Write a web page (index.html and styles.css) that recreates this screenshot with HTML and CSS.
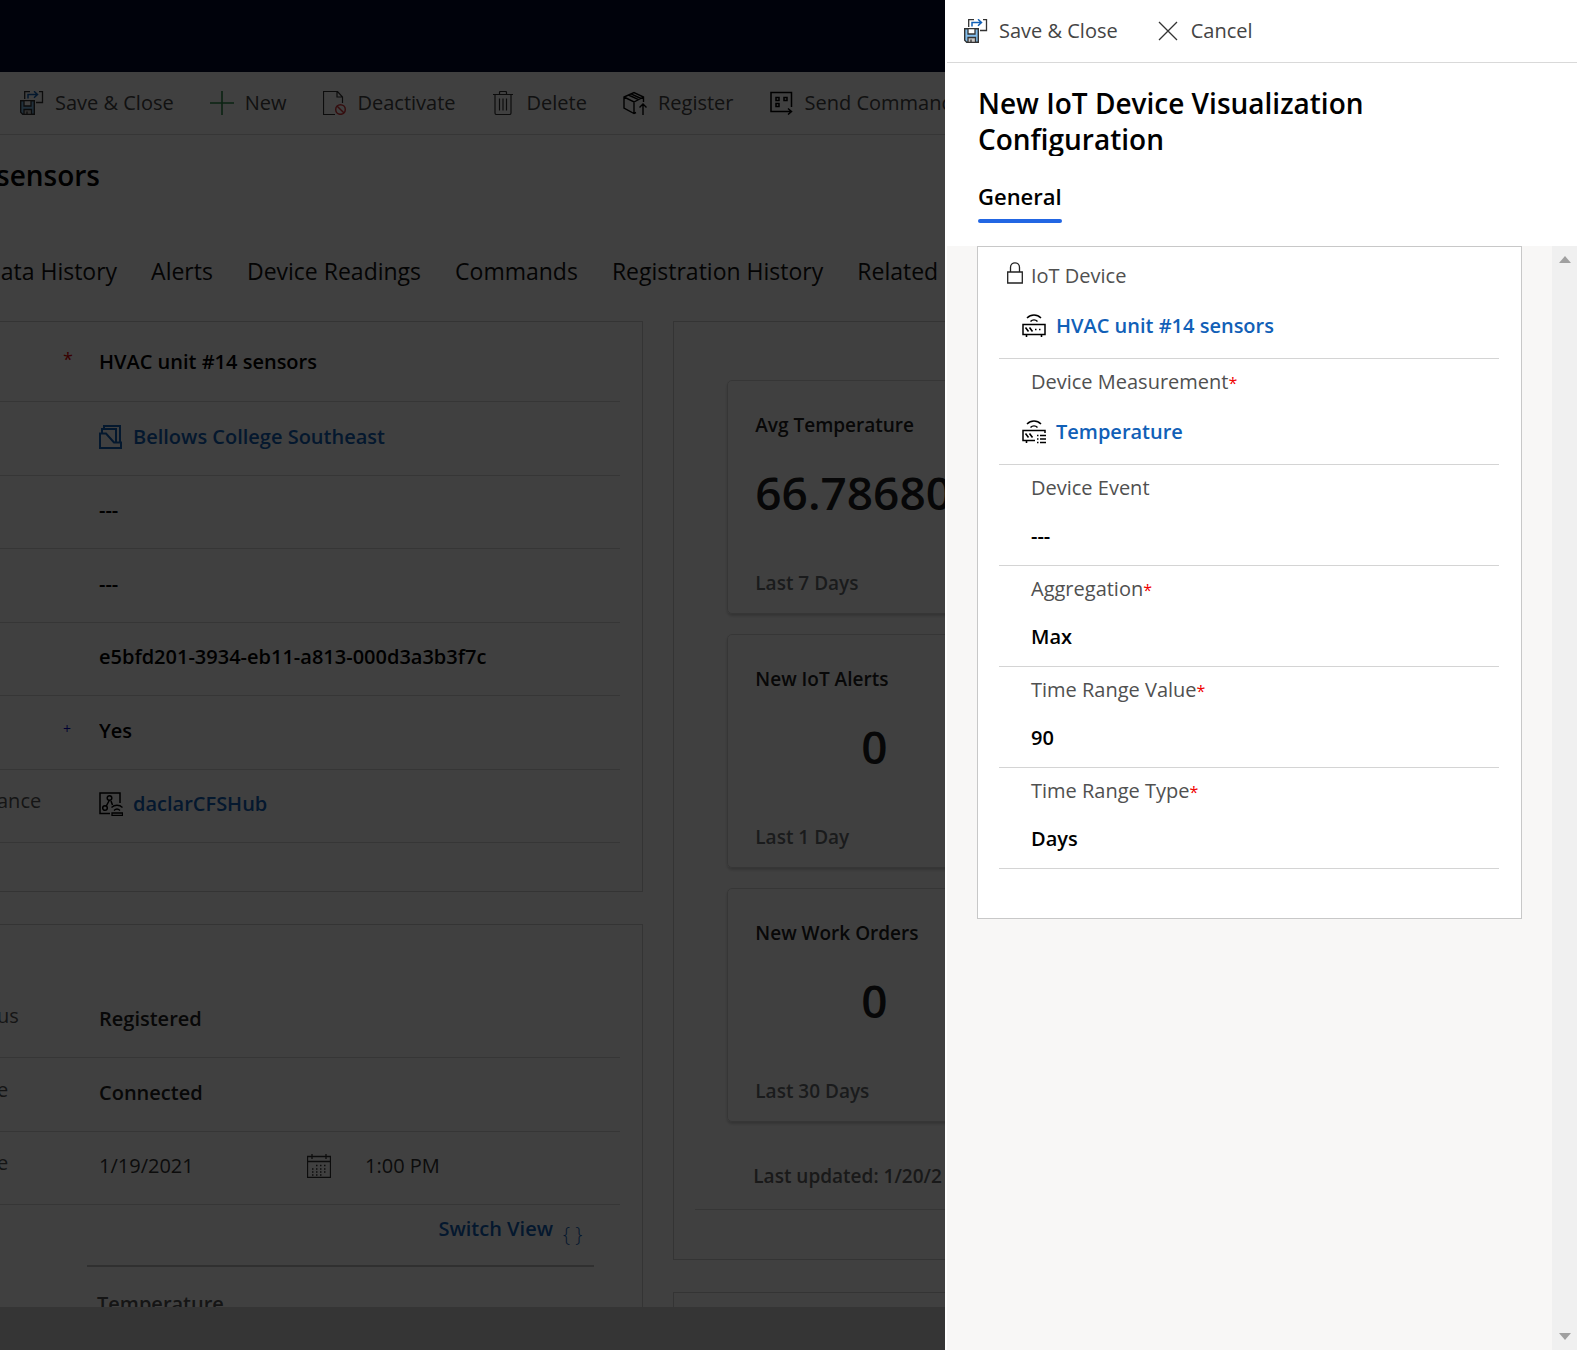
FILE: index.html
```html
<!DOCTYPE html>
<html lang="en">
<head>
<meta charset="utf-8">
<title>New IoT Device Visualization Configuration</title>
<link rel="stylesheet" href="styles.css">
</head>
<body>
<svg class="sprite" aria-hidden="true">
  <symbol id="i-save" viewBox="0 0 24 24">
    <path d="M4.700 8V.7H10M19 .7h3.500v10.800H16" fill="none" stroke="#333" stroke-width="1.300"/>
    <path d="M8 7.500V3.500h9.500M14 .3l3.500 3.200L14 6.700" fill="none" stroke="#1160b7" stroke-width="1.500"/>
    <path d="M.7 9.700h13.600v13.600H2.700l-2-2z" fill="#83beec" stroke="#333" stroke-width="1.400"/>
    <path d="M4 9.700h7V15H4z" fill="#fff" stroke="#333" stroke-width="1.300"/>
    <path d="M4 18.500h7.500v4.800H4z" fill="#c8c6c4" stroke="#333" stroke-width="1.300"/>
    <path d="M7 20.500v3" stroke="#333" stroke-width="1.300"/>
  </symbol>
  <symbol id="i-sensor" viewBox="0 0 24 24">
    <path d="M5 4c4-4 10-4 14 0M8.500 7.500c2-2 5-2 7 0" fill="none" stroke="#000" stroke-width="1.500"/>
    <path d="M1 10.500h22v10H1z" fill="none" stroke="#000" stroke-width="1.500"/>
    <path d="M3.500 13.500l3 4M7.500 13.500l3 4M13 15.500h1.500M17 15.500h1.500M4.500 20.500v2.500M19.500 20.500v2.500" fill="none" stroke="#000" stroke-width="1.600"/>
  </symbol>
  <symbol id="i-measure" viewBox="0 0 24 24">
    <path d="M5 4c4-4 10-4 14 0M8.500 7.500c2-2 5-2 7 0" fill="none" stroke="#000" stroke-width="1.500"/>
    <path d="M23 13v-2.500H1v10h12" fill="none" stroke="#000" stroke-width="1.500"/>
    <path d="M3.500 13.500l3 4M7.500 13.500l3 4M4.500 20.500v2.500" fill="none" stroke="#000" stroke-width="1.600"/>
    <path d="M15 15.500h1.500M18 15.500h6M15 19h1.500M18 19h6M15 22.500h1.500M18 22.500h6" stroke="#000" stroke-width="1.600"/>
  </symbol>
</svg>

<div class="app">
  <header class="topbar"></header>
  <nav class="commands" aria-label="Commands">
    <button class="command"><svg class="icon"><use href="#i-save"/></svg>Save &amp; Close</button>
    <button class="command"><svg class="icon" viewBox="0 0 24 24"><path d="M12 0v24M0 12h24" stroke="#2a8a4a" stroke-width="1.600"/></svg>New</button>
    <button class="command"><svg class="icon" viewBox="0 0 24 24"><path d="M12 23.500H.5V.5h14l5 5.500v6M14 .5V6h5.500" fill="none" stroke="#333" stroke-width="1.200"/><circle cx="17.500" cy="18.500" r="4.800" fill="none" stroke="#d13438" stroke-width="1.500"/><path d="M14.200 15.200l6.600 6.600" stroke="#d13438" stroke-width="1.500"/></svg>Deactivate</button>
    <button class="command"><svg class="icon" viewBox="0 0 24 24"><path d="M1 3.500h20M3 3.500V22q0 1.500 1.500 1.500h13Q19 23.500 19 22V3.500M7.500 3.500v-2q0-1 1-1h5q1 0 1 1v2M7.500 7.500v12M11 7.500v12M14.500 7.500v12" fill="none" stroke="#333" stroke-width="1.200"/></svg>Delete</button>
    <button class="command"><svg class="icon" viewBox="0 0 24 24"><path d="M13 21.500l-2 1L1 17V6l10-4.500L20.500 6v5M1 6l10 5 9.500-5M11 11v11.500M5.500 4l10 4.700M8 2.800l10 4.700M20 24V13.500M16.500 16.500l3.500-3.500 3.500 3.500" fill="none" stroke="#000" stroke-width="1.400"/></svg>Register</button>
    <button class="command"><svg class="icon" viewBox="0 0 24 24"><path d="M21.500 16V1.500H1v19h20M18 17.500l3.500 3-3.500 3M6 6.500h3v3H6zM14 6.500h3v3h-3zM6 12.500h3v3H6z" fill="none" stroke="#000" stroke-width="1.500"/></svg>Send Command</button>
  </nav>
  <h1 class="record-title">sensors</h1>
  <nav class="tabs" aria-label="Form tabs">
    <a href="#data">Data History</a><a href="#alerts">Alerts</a><a href="#readings">Device Readings</a><a href="#commands">Commands</a><a href="#registration">Registration History</a><a href="#related">Related</a>
  </nav>

  <main class="record">
    <div class="column">
      <section class="section details">
        <div class="row first"><span class="row-label"><i class="mark required">*</i></span><input class="value" aria-label="Name" value="HVAC unit #14 sensors"></div>
        <div class="row"><span class="row-label"></span><svg class="icon" viewBox="0 0 24 24"><path d="M1 8.500h6l8 9h7v5.500H1zM3 8.500V4h14v13M5 4V1h16v16.500" fill="none" stroke="#1160b7" stroke-width="2"/></svg><a class="lookup" href="#account">Bellows College Southeast</a></div>
        <div class="row"><span class="row-label"></span><input class="value" aria-label="Category" value="---"></div>
        <div class="row"><span class="row-label"></span><input class="value" aria-label="Parent device" value="---"></div>
        <div class="row"><span class="row-label"></span><input class="value" aria-label="Device ID" value="e5bfd201-3934-eb11-a813-000d3a3b3f7c"></div>
        <div class="row"><span class="row-label"><i class="mark recommended">+</i></span><input class="value" aria-label="Simulated" value="Yes"></div>
        <div class="row"><span class="row-label">ance</span><svg class="icon" viewBox="0 0 24 24"><path d="M11 21.500H1V1h20v10M10.500 8L7 14.500M12 9l1.500 4" fill="none" stroke="#000" stroke-width="1.500"/><circle cx="10.500" cy="6" r="2.300" fill="none" stroke="#000" stroke-width="1.500"/><circle cx="6" cy="16" r="2.300" fill="none" stroke="#000" stroke-width="1.500"/><path d="M12.500 15.500c3-3 8-3 11 0M15 18.500c2-2 4-2 6 0M13 21h10.500v2.500H13z" fill="none" stroke="#000" stroke-width="1.300"/></svg><a class="lookup" href="#hub">daclarCFSHub</a></div>
      </section>
      <section class="section status">
        <div class="row"><span class="row-label">us</span><input class="value soft" aria-label="Registration status" value="Registered"></div>
        <div class="row"><span class="row-label">e</span><input class="value soft" aria-label="Connection state" value="Connected"></div>
        <div class="row"><span class="row-label">e</span><input class="date" aria-label="Last activity date" value="1/19/2021"><button class="picker" aria-label="Choose date"><svg class="icon" viewBox="0 0 24 24"><path d="M.5 2.500h23v21H.5zM.5 7.500h23M5 0v5M19 0v5" fill="none" stroke="#333" stroke-width="1.300"/><path d="M9 11.500h11M5 15h15M5 18h15M5 21h11" stroke="#333" stroke-width="1.500" stroke-dasharray="1.500 2.500"/></svg></button><input class="date" aria-label="Last activity time" value="1:00 PM"></div>
        <div class="device-data">
          <div class="switch"><a href="#view">Switch View</a><span class="braces">{ }</span></div>
          <p class="reading">Temperature</p>
        </div>
      </section>
    </div>
    <div class="column">
      <section class="section summary">
        <div class="tiles">
          <article class="tile"><h2>Avg Temperature</h2><p class="number long">66.78680</p><p class="period">Last 7 Days</p></article>
          <article class="tile"><h2>New IoT Alerts</h2><p class="number">0</p><p class="period">Last 1 Day</p></article>
          <article class="tile"><h2>New Work Orders</h2><p class="number">0</p><p class="period">Last 30 Days</p></article>
        </div>
        <p class="updated">Last updated: 1/20/2</p>
      </section>
      <section class="section next"></section>
    </div>
  </main>
  <footer class="statusbar"></footer>
</div>
<div class="scrim"></div>

<aside class="panel" role="dialog" aria-labelledby="panel-title">
  <div class="panel-commands">
    <button class="command"><svg class="icon"><use href="#i-save"/></svg>Save &amp; Close</button>
    <button class="command"><svg class="icon" viewBox="0 0 24 24"><path d="M3 3l18 18M21 3L3 21" stroke="#333" stroke-width="1.300"/></svg>Cancel</button>
  </div>
  <div class="panel-head">
    <h2 class="panel-title" id="panel-title">New IoT Device Visualization Configuration</h2>
    <a class="panel-tab" href="#general">General</a>
  </div>
  <div class="panel-body">
    <form class="card">
      <div class="field lookup-field">
        <span class="field-label"><svg class="lock" viewBox="0 0 16 22"><path d="M.7 10h14.600v11H.7zM3.500 10V5.500c0-6.300 9-6.300 9 0V10" fill="none" stroke="#222" stroke-width="1.300"/></svg>IoT Device</span>
        <div class="field-lookup"><svg class="icon"><use href="#i-sensor"/></svg><a class="lookup" href="#device">HVAC unit #14 sensors</a></div>
      </div>
      <div class="field lookup-field">
        <span class="field-label">Device Measurement<i class="star">*</i></span>
        <div class="field-lookup"><svg class="icon"><use href="#i-measure"/></svg><a class="lookup" href="#measurement">Temperature</a></div>
      </div>
      <div class="field"><label class="field-label" for="event">Device Event</label><input class="value" id="event" value="---"></div>
      <div class="field"><label class="field-label" for="aggregation">Aggregation<i class="star">*</i></label><select class="value" id="aggregation"><option>Max</option></select></div>
      <div class="field"><label class="field-label" for="range">Time Range Value<i class="star">*</i></label><input class="value" id="range" value="90"></div>
      <div class="field"><label class="field-label" for="type">Time Range Type<i class="star">*</i></label><select class="value" id="type"><option>Days</option></select></div>
    </form>
    <div class="scrollbar" aria-hidden="true">
      <svg class="arrow" viewBox="0 0 12 7"><path d="M0 7l6-7 6 7z"/></svg>
      <svg class="arrow" viewBox="0 0 12 7"><path d="M0 0l6 7 6-7z"/></svg>
    </div>
  </div>
</aside>
</body>
</html>
```
FILE: styles.css
```css
* { box-sizing: border-box; margin: 0; }

body {
  position: relative;
  height: 100vh;
  overflow: hidden;
  font: 20px/28px "Open Sans", "Noto Sans", sans-serif;
  color: #333;
}

a { color: inherit; text-decoration: none; }
i { font-style: normal; }

button, input, select {
  padding: 0;
  border: 0;
  background: none;
  color: inherit;
  font: inherit;
  appearance: none;
}

.sprite { position: absolute; width: 0; height: 0; }
.icon { display: block; flex: none; width: 24px; height: 24px; }

/* Record page */
.app { display: flex; flex-direction: column; height: 100%; background: #fff; }
.topbar { flex: none; height: 72px; background: #000a2c; }

.commands {
  display: flex;
  flex: none;
  gap: 36px;
  height: 63px;
  padding-left: 20px;
  border-bottom: 1px solid #d8d8d8;
}
.command {
  display: flex;
  align-items: center;
  gap: 11px;
  white-space: nowrap;
  color: #444;
}

.record-title {
  flex: none;
  margin-left: -4px;
  padding: 22px 0 50px;
  font-size: 28px;
  line-height: 36px;
  font-weight: 600;
  color: #000;
}

.tabs {
  display: flex;
  flex: none;
  gap: 34px;
  margin-left: -16px;
  height: 78px;
  font-size: 23px;
  line-height: 56px;
  color: #111;
  white-space: nowrap;
}

.record {
  display: grid;
  flex: 1;
  grid-template-columns: 42fr 59fr;
  gap: 30px;
  min-height: 0;
  overflow: hidden;
}
.column { display: flex; flex-direction: column; gap: 32px; min-width: 0; }
.section { border: 1px solid #d0d0d0; }
.column:first-child .section { border-left: 0; padding-right: 22px; }
.details { padding-bottom: 48px; }
.status { padding-top: 60px; }

.row {
  display: flex;
  align-items: center;
  height: 74px;
  padding-bottom: 4px;
  border-bottom: 1px solid #d8d8d8;
}
.row:nth-child(odd) { height: 73px; }
.row.first { height: 80px; padding-bottom: 0; }
.row-label { flex: none; width: 102px; margin-left: -3px; padding-bottom: 6px; color: #555; }
.mark { margin-left: 66px; }
.required { color: #e00000; font-size: 18px; }
.recommended { color: #0000c8; font-size: 14px; }
.value { flex: 1; min-width: 0; font-weight: 600; color: #000; }
.soft { color: #222; }
.lookup { margin-left: 10px; font-weight: 600; color: #1160b7; }
.date { width: 208px; color: #333; }
.picker { margin-right: 34px; }

.device-data { margin: 0 26px 0 87px; }
.switch {
  display: flex;
  justify-content: flex-end;
  gap: 10px;
  height: 62px;
  padding: 10px 12px 0 0;
  border-bottom: 2px solid #c0c0c0;
  font-weight: 600;
  color: #1160b7;
}
.braces { padding-top: 6px; font-weight: 300; }
.reading { padding: 23px 0 0 10px; color: #555; font-weight: 600; }

.summary { padding: 58px 0 49px 53px; }
.tiles { display: grid; gap: 20px; }
.tile {
  width: 294px;
  height: 234px;
  padding: 30px 27px 0;
  border: 1px solid #d8d8d8;
  border-radius: 5px;
  box-shadow: 0 2px 3px #ccc;
}
.tile h2 { font-size: 19px; line-height: 28px; font-weight: 600; color: #222; }
.number {
  padding: 22px 0 46px;
  font-size: 46px;
  line-height: 62px;
  font-weight: 600;
  text-align: center;
  color: #1c1f22;
}
.long { text-align: left; }
.period { font-size: 19px; font-weight: 600; color: #6a6e72; }
.updated {
  margin-left: -32px;
  padding: 40px 0 19px 58px;
  border-bottom: 1px solid #d8d8d8;
  font-size: 19px;
  font-weight: 600;
  color: #666;
}
.next { flex: 1; border-bottom: 0; }
.statusbar { flex: none; height: 43px; background: #d3d3d3; }

.scrim { position: absolute; inset: 0; background: rgba(0, 0, 0, 0.75); }

/* Side panel laid over the record */
.panel {
  position: absolute;
  inset: 0 0 0 auto;
  display: flex;
  flex-direction: column;
  width: 40%;
  min-width: 632px;
  padding-left: 2px;
  background: #fff;
}
.panel-commands {
  display: flex;
  flex: none;
  gap: 38px;
  height: 63px;
  padding-left: 17px;
  border-bottom: 1px solid #d9d9d9;
}
.panel-head { flex: none; height: 183px; padding: 22px 31px 0; }
.panel-title {
  max-width: 440px;
  height: 71px;
  overflow: hidden;
  font-size: 28px;
  line-height: 36px;
  font-weight: 600;
  color: #000;
}
.panel-tab {
  display: inline-block;
  position: relative;
  margin-top: 20px;
  padding-bottom: 6px;
  font-size: 22px;
  line-height: 41px;
  font-weight: 600;
  color: #000;
}
.panel-tab::after {
  content: "";
  position: absolute;
  inset: auto 0 0;
  height: 4px;
  border-radius: 2px;
  background: #2266e3;
}
.panel-body { display: flex; flex: 1; align-items: flex-start; background: #f8f7f6; }
.card {
  flex: 1;
  margin: 0 30px;
  padding: 6px 22px 49px 21px;
  border: 1px solid #c8c8c8;
  background: #fff;
}
.field {
  display: flex;
  flex-direction: column;
  height: 101px;
  padding: 9px 0 0 32px;
  border-bottom: 1px solid #d4d4d4;
}
.field .value { flex: none; height: 28px; margin-top: 20px; }
.lookup-field { height: 106px; }
.field-label { position: relative; color: #505050; }
.star { color: #f00000; font-size: 16px; line-height: 20px; }
.lock { position: absolute; right: 100%; top: 0; width: 16px; height: 22px; margin-right: 8px; }
.field-lookup { display: flex; align-items: center; margin: 22px 0 0 -9px; }

.scrollbar {
  display: flex;
  flex: none;
  flex-direction: column;
  justify-content: space-between;
  align-items: center;
  align-self: stretch;
  width: 25px;
  padding: 10px 0;
  background: #f0f0f0;
}
.arrow { width: 12px; height: 7px; fill: #a0a0a0; }
```
